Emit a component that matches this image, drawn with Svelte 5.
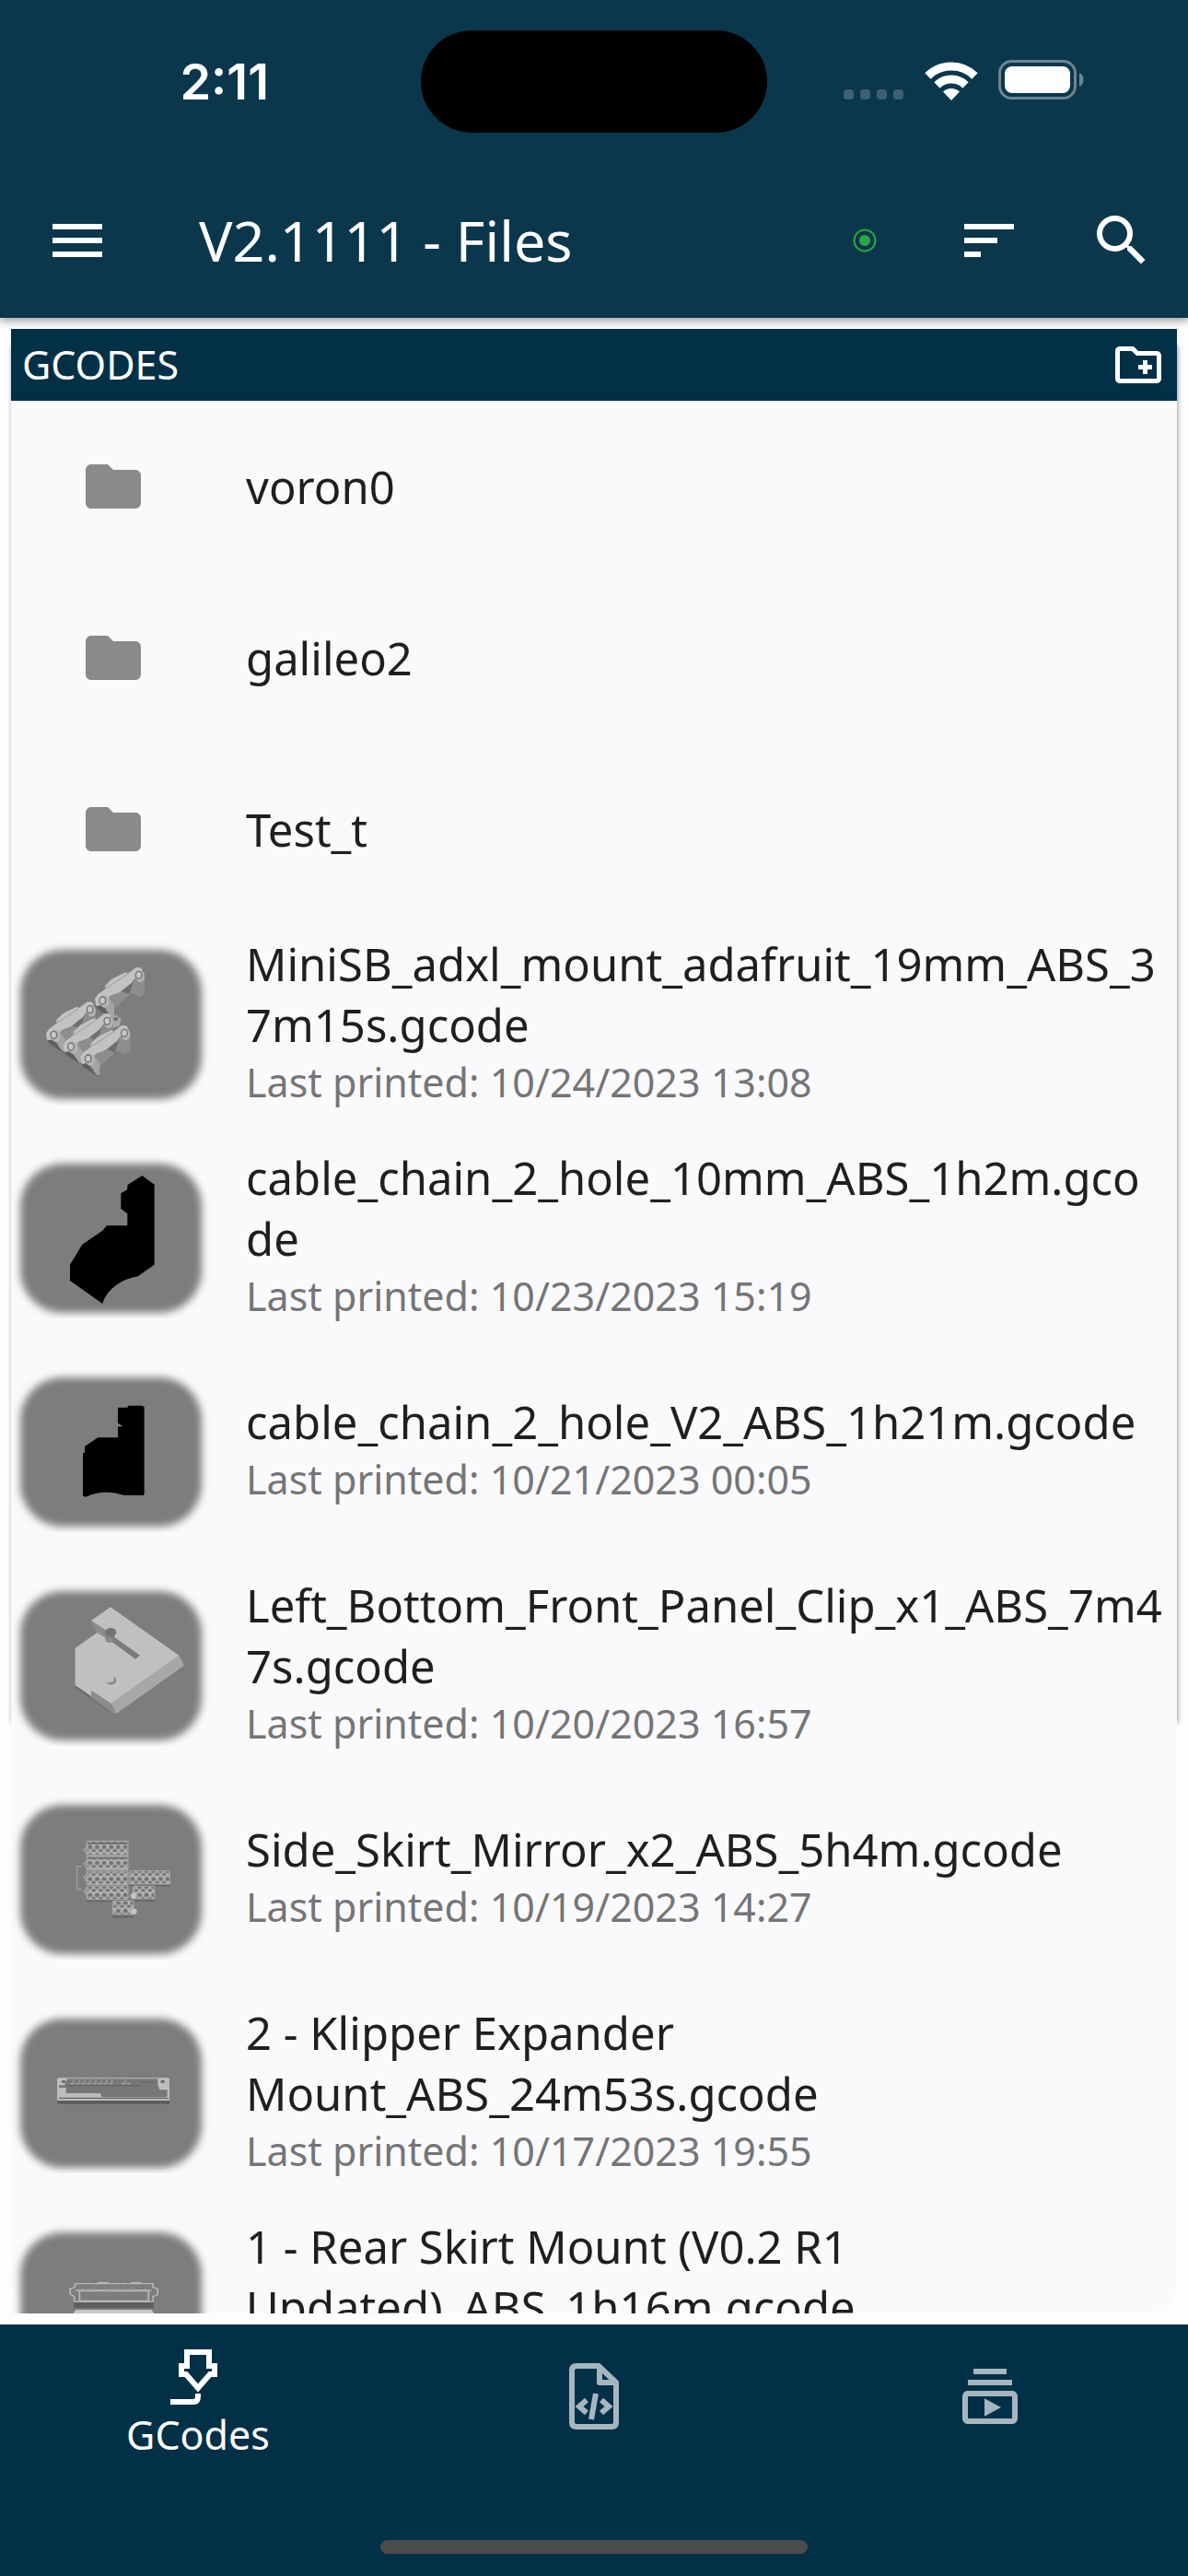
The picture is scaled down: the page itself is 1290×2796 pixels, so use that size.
<script>
  const folders = ['voron0', 'galileo2', 'Test_t'];
  // Each name is a list of parts between which a line may break.
  const files = [
    { art: 'mount', name: ['MiniSB_adxl_mount_adafruit_19mm_ABS_3', '7m15s.gcode'], printed: '10/24/2023 13:08' },
    { art: 'chain', name: ['cable_chain_2_hole_10mm_ABS_1h2m.gco', 'de'], printed: '10/23/2023 15:19' },
    { art: 'chain2', name: ['cable_chain_2_hole_V2_ABS_1h21m.gcode'], printed: '10/21/2023 00:05' },
    { art: 'clip', name: ['Left_Bottom_Front_Panel_Clip_x1_ABS_7m4', '7s.gcode'], printed: '10/20/2023 16:57' },
    { art: 'skirt', name: ['Side_Skirt_Mirror_x2_ABS_5h4m.gcode'], printed: '10/19/2023 14:27' },
    { art: 'expander', name: ['2 - Klipper Expander ', 'Mount_ABS_24m53s.gcode'], printed: '10/17/2023 19:55' },
    { art: 'rear', name: ['1 - Rear Skirt Mount (V0.2 R1 ', 'Updated)_ABS_1h16m.gcode'] }
  ];
</script>

{#snippet bracket()}
  <path fill="#5f5f5f" d="M152 384 158 396 203 426 213 424 200 380z" />
  <path fill="#8d8d8d" d="M180 382 205 424 214 395 270 345 295 357 304 353 312 345 312 295 300 270 240 300 190 340z" />
  <path fill="#6f6f6f" d="M240 305 280 295 262 350 236 340z" />
  <path fill="#a4a4a4" d="M180 390 203 424 213 422 213 385 195 362z" />
  <path fill="#c2c2c2" d="M150 365 160 350 185 332 183 322 205 300 250 278 258 282 283 263 296 262 305 268 302 278 284 292 270 312 232 342 200 354 192 366 186 382 154 388z" />
  <path fill="none" stroke="#9b9b9b" stroke-width="2" d="M185 332 258 284M183 322 190 328 252 286" />
  <ellipse cx="182" cy="373" rx="15" ry="20" fill="#b4b4b4" />
  <ellipse cx="298" cy="291" rx="14" ry="19" fill="#b4b4b4" />
  <ellipse cx="175" cy="370" rx="10" ry="12" fill="#c8c8c8" stroke="#6e6e6e" stroke-width="4" />
  <ellipse cx="293" cy="287" rx="10" ry="12" fill="#c8c8c8" stroke="#6e6e6e" stroke-width="4" />
{/snippet}

{#snippet thumb(art)}
  <svg class="thumb" viewBox="0 -2 222 180" aria-hidden="true">
    <defs>
      <filter id="soft" x="-10%" y="-10%" width="120%" height="120%"><feGaussianBlur stdDeviation="4" /></filter>
      <pattern id="hex" width="23" height="26" patternUnits="userSpaceOnUse" x="282" y="246">
        <rect width="23" height="26" fill="#b5b5b5" />
        <path fill="#737373" d="M4 5 11 1 19 5V12L11 16 4 12zM-7 18 0 14 7 18V24H-7zM16 18 23 14 30 18V24H16z" />
      </pattern>
    </defs>
    <rect x="10" y="10" width="197" height="162" rx="46" fill="#7d7d7f" filter="url(#soft)" />
    {#if art === 'mount'}
      <g transform="translate(-12 -21) scale(.3333)">
        <g transform="translate(159 -112)">{@render bracket()}</g>
        <path fill="#a9a9a9" d="M362 312 378 305 394 318 390 340 366 348z" />
        <ellipse cx="377" cy="318" rx="8" ry="6" fill="#6e6e6e" />
        {@render bracket()}
        <g transform="translate(56 38)">{@render bracket()}</g>
        <path fill="#696969" d="M322 455 382 412 384 424 326 466z" />
        <g transform="translate(112 77)">{@render bracket()}</g>
      </g>
    {:else if art === 'chain'}
      <g transform="translate(-12 -253) scale(.3333)">
        <path d="M463 828 503 857V1118L449 1156C398 1165 350 1195 334 1245L228 1170V1118L268 1052 334 1007 348 991H415V952L394 936V886L415 873V859z" />
      </g>
    {:else if art === 'chain2'}
      <g transform="translate(-12 -25) scale(.3333)">
        <path d="M386 203H415L418 197H464L470 202V486L466 489H405C360 475 320 475 280 494L270 491V353L276 349V330L319 301H384V266L400 264 384 254V206z" />
      </g>
    {:else if art === 'clip'}
      <g transform="translate(-12 -257) scale(.3333)">
        <path fill="#6c6c6c" d="M245 1108V1116L368 1201H379L362 1168z" />
        <path fill="#8c8c8c" d="M297 897 316 937 340 955 350 920zM297 1125V1147L370 1200 379 1200 362 1167z" />
        <path fill="#a7a7a7" d="M362 1167 583 1010 600 1043 379 1200z" />
        <path fill="#c0c0c0" d="M360 853 583 1010 362 1167 297 1124V1143L245 1108V986L317 936 342 953 345 928 297 897z" />
        <path fill="#7b7b7b" d="M342 930 378 934 372 951 456 1010 441 1022 368 968 345 965z" />
        <ellipse cx="361" cy="934" rx="18" ry="13" fill="#737373" />
        <path fill="#8a8a8a" d="M344 952H368V966L356 969 344 962zM371 1078C385 1090 380 1105 360 1106L344 1100 370 1096z" />
      </g>
    {:else if art === 'skirt'}
      <g transform="translate(-12 -29) scale(.3333)">
        <path fill="#696969" d="M282 425H418V433H282zM423 375H554V383H423zM434 423H504V432H434zM366 474H436V485H366z" />
        <path fill="none" stroke="#aaa" stroke-width="3" d="M266 317H251V392H266" />
        <path fill="none" stroke="#aaa" stroke-width="4" d="M286 252 274 262 286 278M286 298 274 308 286 326M286 342 274 352 286 372M286 388 274 398 286 416" />
        <g fill="url(#hex)" stroke="#ababab" stroke-width="3">
          <path d="M283 235H417V280H283zM283 284H417V328H283zM283 333H417V377H283zM283 382H417V425H283zM423 332H553V375H423zM434 382H503V423H434zM367 430H435V474H367z" />
        </g>
        <path fill="#747474" d="M286 239H415V246H286zM286 288H415V293H286z" />
        <path fill="#c2c2c2" d="M424 413 430 404H444V422H430zM424 464 430 455H442L447 464 442 473H430z" />
      </g>
    {:else if art === 'expander'}
      <g transform="translate(-12 -261) scale(.3333)">
        <path fill="#5c5c5c" d="M186 1080H552V1091H186z" />
        <path fill="#bdbdbd" d="M190 1006H548L552 1010V1080H186V1010z" />
        <path fill="#777" d="M219 1009H514V1030L520 1045H545V1065L540 1069H332L327 1056H215V1038H192V1030H210z" />
        <path fill="#656565" d="M192 1070H549V1074H192zM217 1029H460V1033H217zM460 1018H500V1021H460z" />
        <path fill="none" stroke="#c9c9c9" stroke-width="2" d="M227 1025H240V1012M246 1025H258V1012M264 1025H276V1012M282 1025H294V1012M300 1025H312V1012M318 1025H330V1012M336 1025H347V1012M353 1025H365V1012M396 1025H408V1012M414 1025H426" />
        <ellipse cx="207" cy="1018" rx="7" ry="5" fill="#666" />
        <ellipse cx="530" cy="1018" rx="7" ry="5" fill="#666" />
      </g>
    {:else}
      <g transform="translate(-12 -33) scale(.4114 .3333)">
        <path fill="#5e5e5e" d="M195 357H406V376H195z" />
        <path fill="none" stroke="#b8b8b8" stroke-width="4" d="M198 296H403V308L416 313V332L404 338V355H196V338L185 330V313L198 308zM210 320H392V352H210zM200 318H400M258 293H286M345 293H373" />
        <path fill="none" stroke="#a5a5a5" stroke-width="2" d="M249 305V318M275 305V318M301 305V318M326 305V318M352 305V318M218 307V318M384 307V318" />
        <path fill="#c6c6c6" d="M200 381H400L408 395V430H192V395z" />
      </g>
    {/if}
  </svg>
{/snippet}

<div class="app">
  <header>
    <div class="status">
      <div class="clock">2:11</div>
      <div class="island"></div>
      <div class="signals">
        <svg class="cell" viewBox="0 0 66 12" aria-hidden="true">
          <g fill="#3e6072">
            <rect width="11" height="11" rx="4" /><rect x="18" width="11" height="11" rx="4" />
            <rect x="36" width="11" height="11" rx="4" /><rect x="54" width="11" height="11" rx="4" />
          </g>
        </svg>
        <svg class="wifi" viewBox="0 0 58 42" aria-hidden="true">
          <g fill="none" stroke="#fff" stroke-width="9">
            <path d="M3.500 15.500A36 36 0 0 1 54.500 15.500" />
            <path d="M13.500 25.500A22 22 0 0 1 44.500 25.500" />
          </g>
          <path fill="#fff" d="M20 32.500A13 13 0 0 1 38 32.500L29 42z" />
        </svg>
        <svg class="battery" viewBox="0 0 96 44" aria-hidden="true">
          <rect x="1.500" y="1.500" width="82" height="40" rx="13" fill="none" stroke="#6d8592" stroke-width="3" />
          <rect x="7" y="7" width="71" height="29" rx="8" fill="#fff" />
          <path fill="#6d8592" d="M88 14C94 16 94 27 88 29z" />
        </svg>
      </div>
    </div>
    <div class="toolbar">
      <button class="tool" aria-label="Menu">
        <svg viewBox="0 0 24 24"><path d="M3 18h18v-2H3v2zm0-5h18v-2H3v2zm0-7v2h18V6H3z" /></svg>
      </button>
      <h1>V2.1111 - Files</h1>
      <svg class="live" viewBox="0 0 26 26" role="img" aria-label="Connected">
        <circle cx="13" cy="13" r="11.500" fill="none" stroke="#28a745" stroke-width="2" />
        <circle cx="13" cy="13" r="6" fill="#28a745" />
      </svg>
      <button class="tool" aria-label="Sort">
        <svg viewBox="0 0 24 24"><path d="M3 18h6v-2H3v2zM3 6v2h18V6H3zm0 7h12v-2H3v2z" /></svg>
      </button>
      <button class="tool" aria-label="Search">
        <svg viewBox="0 0 24 24"><path d="M15.500 14h-.79l-.28-.27A6.471 6.471 0 0 0 16 9.500 6.500 6.500 0 1 0 9.500 16c1.610 0 3.090-.59 4.230-1.570l.27.28v.79l5 4.990L20.490 19l-4.990-5zm-6 0C7.010 14 5 11.990 5 9.500S7.010 5 9.500 5 14 7.010 14 9.500 11.990 14 9.500 14z" /></svg>
      </button>
    </div>
  </header>

  <main>
    <section class="card">
      <div class="path">
        <h2>GCODES</h2>
        <button class="add" aria-label="Create folder">
          <svg viewBox="0 0 24 24"><path d="M20 6h-8l-2-2H4c-1.110 0-1.990.89-1.990 2L2 18c0 1.110.89 2 2 2h16c1.110 0 2-.89 2-2V8c0-1.110-.89-2-2-2zm0 12H4V6h5.170l2 2H20v10zm-8-4h2v2h2v-2h2v-2h-2v-2h-2v2h-2z" /></svg>
        </button>
      </div>
      <ul>
        {#each folders as folder}
          <li>
            <button class="row folder">
              <span class="lead">
                <svg class="folder-icon" viewBox="0 0 24 24" aria-hidden="true"><path d="M10 4H4c-1.100 0-1.990.9-1.990 2L2 18c0 1.100.9 2 2 2h16c1.100 0 2-.9 2-2V8c0-1.100-.9-2-2-2h-8l-2-2z" /></svg>
              </span>
              <span class="name">{folder}</span>
            </button>
          </li>
        {/each}
        {#each files as file}
          <li>
            <button class="row file">
              <span class="lead">{@render thumb(file.art)}</span>
              <span class="text">
                <span class="name">{#each file.name as part, i}{#if i}<wbr />{/if}{part}{/each}</span>
                <span class="sub">{#if file.printed}Last printed: {file.printed}{/if}</span>
              </span>
            </button>
          </li>
        {/each}
      </ul>
    </section>
  </main>

  <nav>
    <div class="tabs">
      <button class="tab active">
        <svg viewBox="0 0 72 72" aria-hidden="true">
          <g fill="none" stroke="currentColor" stroke-width="6">
            <path d="M24 12H48V27H54V36H49L36 51 23 36H18V27H24z" />
            <path d="M36 57V60Q36 66 31 66H6" />
          </g>
        </svg>
        <span>GCodes</span>
      </button>
      <button class="tab" aria-label="Config files">
        <svg viewBox="0 0 72 72" aria-hidden="true">
          <g fill="none" stroke="currentColor">
            <path stroke-width="6" stroke-linejoin="round" d="M17 3H41L60 21V64Q60 69 55 69H17Q12 69 12 64V8Q12 3 17 3zM42 3V21H60" />
            <path stroke-width="6" d="M28 40 20 47 28 54M44 40 52 47 44 54M38 33 33 61" />
          </g>
        </svg>
      </button>
      <button class="tab" aria-label="Timelapse">
        <svg viewBox="0 0 24 24" aria-hidden="true"><path fill="currentColor" d="M4 6h16v2H4zm2-4h12v2H6zm14 8H4c-1.100 0-2 .9-2 2v8c0 1.100.9 2 2 2h16c1.100 0 2-.9 2-2v-8c0-1.100-.9-2-2-2zm0 10H4v-8h16v8zm-10-7.270v6.530L16 16z" /></svg>
      </button>
    </div>
    <div class="home"></div>
  </nav>
</div>

<style>
  :global(body) {
    margin: 0;
    background: #fdfcff;
  }
  .app {
    display: flex;
    flex-direction: column;
    height: 100vh;
    overflow: hidden;
    font-family: 'Noto Sans', sans-serif;
    color: #1f1f21;
    background: #fdfcff;
  }
  button {
    margin: 0;
    padding: 0;
    border: 0;
    background: none;
    font: inherit;
    color: inherit;
    cursor: pointer;
  }
  svg {
    display: block;
  }
  h1,
  h2,
  ul {
    margin: 0;
    padding: 0;
    font-weight: 400;
    list-style: none;
  }
  header {
    position: relative;
    z-index: 1;
    flex: none;
    color: #fff;
    background: #0b374c;
    box-shadow: 0 3px 9px rgba(0, 0, 0, 0.4);
  }
  .status {
    display: grid;
    grid-template-columns: 1fr 376px 1fr;
    height: 177px;
    align-items: center;
  }
  .clock {
    padding-right: 165px;
    font-family: Inter, sans-serif;
    font-size: 54px;
    font-weight: 600;
    line-height: 60px;
    text-align: right;
  }
  .island {
    height: 111px;
    border-radius: 56px;
    background: #000;
  }
  .signals {
    display: flex;
    align-items: flex-end;
    justify-content: flex-end;
    gap: 22px;
    padding-right: 110px;
    padding-bottom: 3px;
  }
  .cell {
    width: 66px;
    height: 12px;
  }
  .wifi {
    width: 58px;
    height: 42px;
  }
  .battery {
    width: 96px;
    height: 44px;
  }
  .toolbar {
    display: flex;
    align-items: center;
    height: 168px;
  }
  .tool {
    display: grid;
    flex: none;
    place-items: center;
    width: 144px;
    height: 144px;
  }
  .tool:first-child {
    width: 168px;
  }
  .tool svg {
    width: 72px;
    height: 72px;
    fill: #fff;
  }
  h1 {
    flex: 1;
    padding-left: 48px;
    font-size: 61px;
    line-height: 84px;
  }
  .live {
    width: 26px;
    height: 26px;
    margin-right: 50px;
  }
  main {
    position: relative;
    isolation: isolate;
    display: flex;
    flex: 1;
    min-height: 0;
    padding: 12px;
  }
  /* Side shadow that fades out in the lower part of the card. */
  main::before {
    position: absolute;
    z-index: -1;
    inset: 30px 12px 30%;
    box-shadow: 1px 0 5px rgba(0, 0, 0, 0.4);
    content: '';
  }
  .card {
    display: flex;
    flex: 1;
    flex-direction: column;
    min-width: 0;
    border-radius: 0 0 36px 36px;
    background: #fafafc;
  }
  .path {
    display: flex;
    flex: none;
    align-items: center;
    justify-content: space-between;
    height: 78px;
    padding: 0 12px;
    color: #fff;
    background: #023047;
  }
  h2 {
    font-size: 43px;
    line-height: 60px;
  }
  .add svg {
    width: 60px;
    height: 60px;
    fill: #fff;
  }
  ul {
    flex: 1;
    min-height: 0;
    overflow: hidden;
  }
  .row {
    display: flex;
    align-items: center;
    gap: 33px;
    width: 100%;
    padding-right: 12px;
    text-align: left;
  }
  .folder {
    height: 186px;
  }
  .file {
    height: 232px;
  }
  .lead {
    display: grid;
    flex: none;
    place-items: center;
    width: 222px;
  }
  .folder-icon {
    width: 72px;
    height: 72px;
    fill: #8a8a8a;
  }
  .thumb {
    width: 222px;
    height: 180px;
  }
  .text {
    display: flex;
    flex: 1;
    flex-direction: column;
    min-width: 0;
  }
  .name {
    font-size: 49px;
    line-height: 66px;
  }
  .sub {
    min-height: 60px;
    font-size: 43px;
    line-height: 60px;
    color: #757578;
  }
  nav {
    display: flex;
    flex: none;
    flex-direction: column;
    align-items: center;
    justify-content: space-between;
    box-sizing: border-box;
    height: 273px;
    padding-bottom: 24px;
    color: #fff;
    background: #023047;
  }
  .tabs {
    display: grid;
    grid-template-columns: repeat(3, 1fr);
    width: 100%;
    height: 156px;
  }
  .tab {
    display: flex;
    flex-direction: column;
    align-items: center;
    justify-content: center;
    font-size: 43px;
    line-height: 60px;
    color: #a6b6be;
  }
  .tab.active {
    justify-content: flex-start;
    padding-top: 18px;
    color: #fff;
  }
  .tab svg {
    width: 72px;
    height: 72px;
  }
  .home {
    width: 36%;
    height: 15px;
    border-radius: 8px;
    background: #4b4b4b;
  }
</style>
